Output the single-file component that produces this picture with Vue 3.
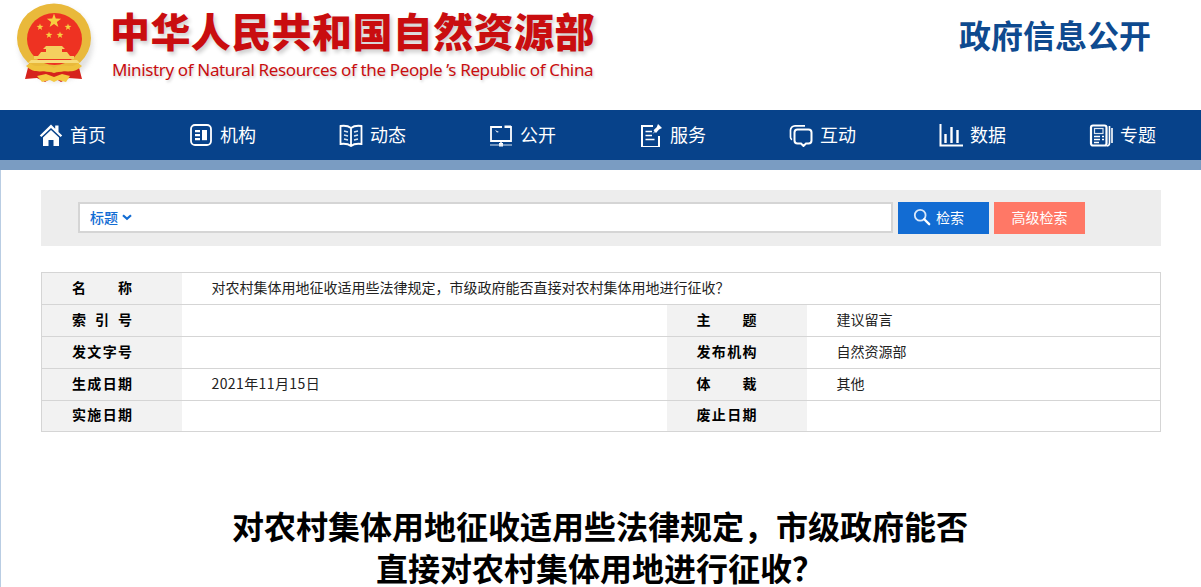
<template>
  <div class="page">
    <header class="top">
      <div class="brand">
        <svg class="emblem" viewBox="0 0 110 95" width="110" height="95">
          <defs>
            <filter id="soft"><feGaussianBlur stdDeviation="0.4" /></filter>
            <filter id="drop"><feGaussianBlur stdDeviation="2.500" /></filter>
          </defs>
          <ellipse cx="56" cy="44" rx="37" ry="38" fill="#aaa" opacity=".35" filter="url(#drop)" />
          <g filter="url(#soft)">
            <path d="M30 60L25 79L37 78L45 82L53 77L61 82L69 78L82 79L77 60Z" fill="#d6231c" />
            <ellipse cx="54" cy="38" rx="37" ry="34.500" fill="#e9b93a" />
            <ellipse cx="54.500" cy="39" rx="27.500" ry="26" fill="#ee3124" />
            <polygon v-for="s in stars" :key="s.cx" :points="starPoints(s)" fill="#f7cf3f" />
            <path d="M46 46h16l3 3h-3v3h5l3 4h4v3H34v-3h4l3-4h5v-3h-3z" fill="#f4cf5e" />
            <path d="M31 60h46l3 3H28z" fill="#f7dc7a" />
            <path d="M30 63C37 70 46 62 54 68C62 62 71 70 78 63L82 66C72 76 62 68 54 73C46 68 36 76 26 66Z" fill="#efc23c" />
            <path d="M37 76L46 74L54 77L62 74L70 76L66 82L58 80L54 82L50 80L42 82Z" fill="#f5c93f" />
          </g>
        </svg>
        <div class="brand-text">
          <div class="cn-name">中华人民共和国自然资源部</div>
          <div class="en-name">Ministry of Natural Resources of the People ’s Republic of China</div>
        </div>
      </div>
      <div class="section-name">政府信息公开</div>
    </header>

    <nav class="nav">
      <a v-for="item in navItems" :key="item.label" class="nav-item">
        <svg viewBox="0 0 24 24" width="24" height="24" v-html="item.icon"></svg>
        <span>{{ item.label }}</span>
      </a>
    </nav>
    <div class="nav-band"></div>

    <main class="content">
      <div class="search">
        <div class="search-box">
          <span class="search-type">标题</span>
          <svg class="chevron" viewBox="0 0 10 7" width="10" height="7">
            <path d="M1 1.200l4 3.600 4-3.600" fill="none" stroke="#126cd3" stroke-width="2.200" />
          </svg>
        </div>
        <button class="btn btn-search">
          <svg viewBox="0 0 20 20" width="18" height="18">
            <circle cx="8" cy="8" r="6" fill="none" stroke="#d9e8fa" stroke-width="2" />
            <path d="M12.500 12.500L18 18" stroke="#fff" stroke-width="2.600" stroke-linecap="round" />
          </svg>
          检索
        </button>
        <button class="btn btn-advanced">高级检索</button>
      </div>

      <table class="info">
        <colgroup>
          <col class="c-label" />
          <col class="c-left" />
          <col class="c-label" />
          <col />
        </colgroup>
        <tbody>
          <tr>
            <th><span class="just">名称</span></th>
            <td colspan="3">对农村集体用地征收适用些法律规定，市级政府能否直接对农村集体用地进行征收？</td>
          </tr>
          <tr v-for="row in infoRows" :key="row[0]">
            <th><span class="just">{{ row[0] }}</span></th>
            <td class="num">{{ row[1] }}</td>
            <th><span class="just">{{ row[2] }}</span></th>
            <td>{{ row[3] }}</td>
          </tr>
        </tbody>
      </table>

      <h1 class="title">对农村集体用地征收适用些法律规定，市级政府能否<br />直接对农村集体用地进行征收？</h1>
    </main>
  </div>
</template>

<script setup>
const stars = [
  { cx: 54, cy: 21, r: 7.5 },
  { cx: 40, cy: 27, r: 3.6 },
  { cx: 68, cy: 27, r: 3.6 },
  { cx: 49, cy: 35, r: 3.6 },
  { cx: 60, cy: 35, r: 3.6 },
];

// five pointed star, point up
const starPoints = ({ cx, cy, r }) => {
  const pts = [];
  for (let i = 0; i < 10; i++) {
    const rad = i % 2 ? r * 0.4 : r;
    const a = (Math.PI / 5) * i - Math.PI / 2;
    pts.push(`${(cx + rad * Math.cos(a)).toFixed(2)},${(cy + rad * Math.sin(a)).toFixed(2)}`);
  }
  return pts.join(" ");
};

const navItems = [
  {
    label: "首页",
    icon: '<path d="M12 1.500L0.800 12.500l1.600 1.500L12 5l9.600 9 1.600-1.500-3.700-3.600V2.500h-3.300v3.200z" fill="#fff"/><path d="M12 7L4 14.500V23h5.500v-6h5v6H20v-8.500z" fill="#fff"/>',
  },
  {
    label: "机构",
    icon: '<rect x="2" y="2" width="20" height="20" rx="4" fill="none" stroke="#fff" stroke-width="1.800"/><path d="M6 7h5v2.200H6zM6 11h5v2.200H6zM6 15h5v2.200H6z" fill="#fff"/><rect x="13" y="7" width="5" height="10.200" fill="#fff"/>',
  },
  {
    label: "动态",
    icon: '<path d="M12 5C9.500 3 5 2.500 1.500 3v18c3.500-.5 8 0 10.500 2 2.500-2 7-2.500 10.500-2V3C19 2.500 14.500 3 12 5zM12 5v18" fill="none" stroke="#fff" stroke-width="1.800"/><path d="M5 8l4 1M5 12l4 1M5 16l4 1M19 8l-4 1M19 12l-4 1M19 16l-4 1" stroke="#dbe5f1" stroke-width="1.500"/>',
  },
  {
    label: "公开",
    icon: '<path d="M13 4H2v14h20V4h-1" fill="none" stroke="#fff" stroke-width="1.800"/><path d="M15.500 2.500H22v2.500h-6.500z" fill="#fff"/><path d="M6 7l4 2-2 .5z" fill="#fff"/><path d="M12 18v3" stroke="#fff" stroke-width="1.500"/><rect x="10" y="20" width="4" height="3.500" fill="#fff"/><path d="M1 22h22" stroke="#dbe5f1" stroke-width="1"/>',
  },
  {
    label: "服务",
    icon: '<path d="M14 3H3v21h17V13" fill="none" stroke="#fff" stroke-width="2"/><path d="M6.500 8.500H13M6.500 12.500H13M6.500 16.500h9" stroke="#fff" stroke-width="1.600"/><path d="M19 1l4 4-3 1.500-3 3.500-1-1-2.500 2 2-2.700-1-1 3.200-3z" fill="#fff"/>',
  },
  {
    label: "互动",
    icon: '<path d="M16 2.800H6a4.500 4.500 0 0 0-4.500 4.500v7a3 3 0 0 0 1.500 2.500" fill="none" stroke="#fff" stroke-width="1.700"/><path d="M9 6.500h10.500a3 3 0 0 1 3 3v8a3 3 0 0 1-3 3H17L14.500 23 12 20.500H8.500a3 3 0 0 1-3-3v-8a3 3 0 0 1 3-3z" fill="none" stroke="#fff" stroke-width="2"/>',
  },
  {
    label: "数据",
    icon: '<path d="M1.500 1v21.500H24" fill="none" stroke="#fff" stroke-width="2"/><path d="M6.500 11v9M12.500 4v16M18.500 7v13" stroke="#fff" stroke-width="2.400"/>',
  },
  {
    label: "专题",
    icon: '<rect x="2" y="2.500" width="15.500" height="20" rx="2" fill="none" stroke="#fff" stroke-width="2.200"/><rect x="5.500" y="5.500" width="8.500" height="5" fill="none" stroke="#dbe5f1" stroke-width="1.200"/><path d="M5 13.500h6M5 16.500h6M5 19.500h5M13 13.500h2M13 16.500h2" stroke="#fff" stroke-width="1.300"/><path d="M20.500 3v17c0 1.800-1 3-3 3M23 5v15" fill="none" stroke="#fff" stroke-width="1.600"/>',
  },
];

const infoRows = [
  ["索引号", "", "主题", "建议留言"],
  ["发文字号", "", "发布机构", "自然资源部"],
  ["生成日期", "2021年11月15日", "体裁", "其他"],
  ["实施日期", "", "废止日期", ""],
];
</script>

<style scoped>
.page {
  width: 1201px;
  height: 587px;
  overflow: hidden;
  background: #fff;
  font-family: "Noto Sans CJK SC", "Noto Sans", sans-serif;
  color: #000;
}
.top {
  height: 110px;
  display: flex;
  justify-content: space-between;
  box-sizing: border-box;
  padding-right: 50px;
}
.brand {
  display: flex;
  align-items: flex-start;
}
.emblem {
  flex: none;
}
.brand-text {
  padding-top: 4px;
}
.cn-name {
  font-size: 40px;
  line-height: 52px;
  font-weight: 900;
  letter-spacing: 0.4px;
  color: #c90d0f;
  white-space: nowrap;
  text-shadow: 2px 3px 4px rgba(0, 0, 0, 0.2);
}
.en-name {
  margin-top: 3px;
  margin-left: 2px;
  font-family: "Noto Sans", sans-serif;
  font-size: 17px;
  line-height: 22px;
  letter-spacing: -0.36px;
  color: #c90d0f;
  white-space: nowrap;
  text-shadow: 1px 2px 3px rgba(0, 0, 0, 0.2);
}
.section-name {
  padding-top: 11px;
  font-size: 32px;
  line-height: 46px;
  font-weight: 700;
  color: #0e4a8f;
}
.nav {
  height: 50px;
  display: flex;
  gap: 83px;
  padding-left: 39px;
  background: #07428a;
}
.nav-item {
  display: flex;
  align-items: center;
  gap: 7px;
  color: #fff;
  font-size: 18px;
  line-height: 24px;
}
.nav-item span {
  width: 36px;
  margin-top: -2px;
}
.nav-item svg {
  flex: none;
}
.nav-band {
  height: 10px;
  background: #7a9cc2;
}
.content {
  height: 417px;
  box-sizing: border-box;
  padding: 20px 40px 0 40px;
  border-left: 1px solid #b9cde3;
}
.search {
  height: 56px;
  display: flex;
  align-items: flex-start;
  box-sizing: border-box;
  padding: 12px 0 0 37px;
  background: #ededed;
}
.search-box {
  width: 815px;
  height: 31px;
  box-sizing: border-box;
  display: flex;
  align-items: center;
  gap: 4px;
  padding-left: 10px;
  background: #fff;
  border: 2px solid #d5d5d5;
}
.search-type {
  font-size: 14px;
  line-height: 20px;
  font-weight: 500;
  color: #126cd3;
  margin-top: -1px;
}
.chevron {
  margin-top: -1px;
}
.btn {
  width: 91px;
  height: 32px;
  margin-left: 5px;
  padding: 0 0 2px;
  border: 0;
  color: #fff;
  font: inherit;
  font-size: 14px;
  display: flex;
  align-items: center;
  justify-content: center;
  gap: 5px;
}
.btn-search {
  padding-right: 10px;
  background: #126cd3;
}
.btn-advanced {
  background: #ff7866;
}
.info {
  width: 1120px;
  margin-top: 26px;
  border-collapse: collapse;
  table-layout: fixed;
  border: 1px solid #d5d5d5;
}
.c-label {
  width: 140px;
}
.c-left {
  width: 485px;
}
.info tr {
  height: 32px;
}
.info tr:last-child {
  height: 31px;
}
.info th,
.info td {
  padding: 0 0 3px;
  border-top: 1px solid #d5d5d5;
  border-bottom: 1px solid #d5d5d5;
  box-sizing: border-box;
  line-height: 20px;
}
.info th {
  background: #f2f2f2;
  font-size: 14px;
  font-weight: 700;
  text-align: left;
  padding-left: 30px;
  padding-bottom: 4px;
}
.info td {
  font-size: 14px;
  font-weight: 400;
  padding-left: 30px;
  color: #222;
}
.info td.num {
  letter-spacing: 0.4px;
}
.just {
  display: inline-block;
  width: 60px;
  text-align-last: justify;
}
.title {
  margin: 72px 0 0;
  font-size: 32px;
  line-height: 42px;
  font-weight: 700;
  text-align: center;
  width: 1118px;
}
</style>

<style>
html,
body {
  margin: 0;
  overflow: hidden;
}
</style>
